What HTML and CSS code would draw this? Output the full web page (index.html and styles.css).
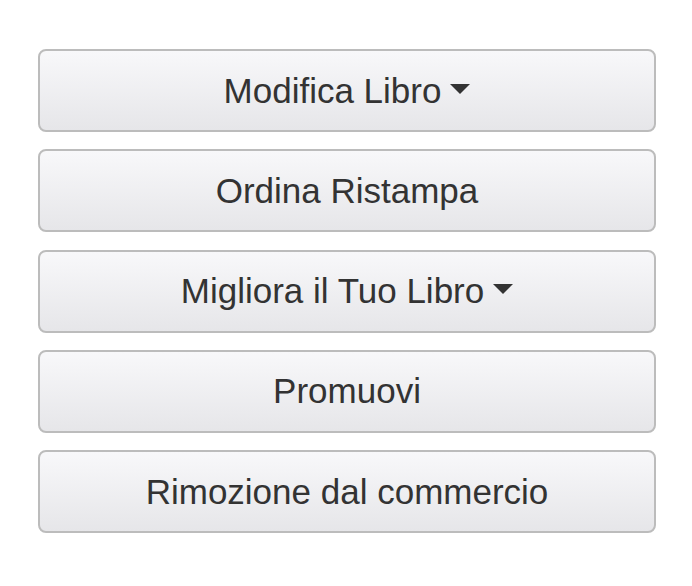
FILE: index.html
```html
<!DOCTYPE html>
<html lang="it">
<head>
    <meta charset="UTF-8">
    <meta name="viewport" content="width=device-width, initial-scale=1.0">
    <title>Azioni Libro</title>
    <link rel="stylesheet" href="styles.css">
</head>
<body>
    <div class="actions">
        <button class="action-btn">Modifica Libro <span class="caret"></span></button>
        <button class="action-btn">Ordina Ristampa</button>
        <button class="action-btn">Migliora il Tuo Libro <span class="caret"></span></button>
        <button class="action-btn">Promuovi</button>
        <button class="action-btn">Rimozione dal commercio</button>
    </div>
</body>
</html>
```

FILE: styles.css
```css
body {
    margin: 0;
    background-color: #ffffff;
    font-family: "Liberation Sans", Arial, sans-serif;
}

.actions {
    display: flex;
    flex-direction: column;
    gap: 17.3px;
    padding: 49px 36px 0 38px;
}

.action-btn {
    box-sizing: border-box;
    height: 83px;
    width: 100%;
    display: flex;
    justify-content: center;
    align-items: center;
    font-family: inherit;
    font-size: 35px;
    color: #333333;
    background: linear-gradient(to bottom, #f8f8fa, #e6e6e9);
    border: 2px solid #bcbcbc;
    border-radius: 8px;
    cursor: pointer;
    padding: 0;
}

.action-btn:hover {
    background: #e6e6e9;
}

.caret {
    display: inline-block;
    width: 0;
    height: 0;
    margin-left: 9px;
    margin-top: -4px;
    border-top: 10px solid #333333;
    border-left: 10px solid transparent;
    border-right: 10px solid transparent;
}
```
